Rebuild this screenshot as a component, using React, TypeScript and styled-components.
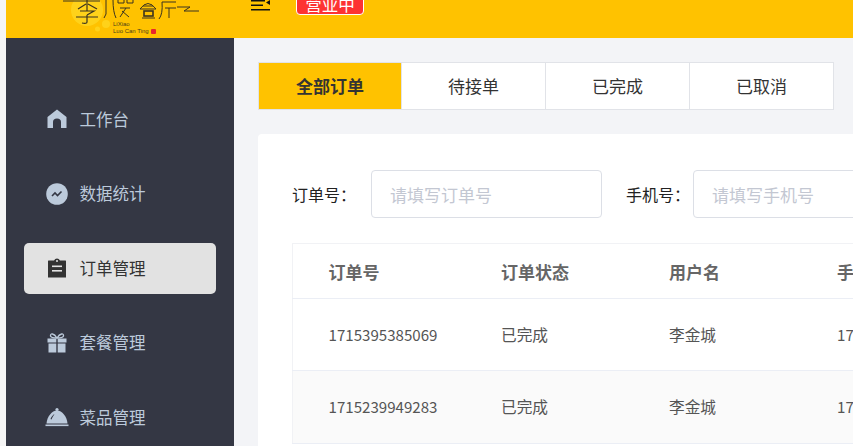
import React from "react";
import styled, { createGlobalStyle } from "styled-components";

const GlobalStyle = createGlobalStyle`
  html, body {
    margin: 0;
    padding: 0;
    height: 100%;
    overflow: hidden;
    background: #f5f5f5;
    font-family: "Noto Sans CJK SC", "Noto Sans", sans-serif;
  }
  * { box-sizing: border-box; }
`;

const tabs = ["全部订单", "待接单", "已完成", "已取消"];
const rows = [
  { id: "1715395385069", status: "已完成", user: "李金城", phone: "17" },
  { id: "1715239949283", status: "已完成", user: "李金城", phone: "17" },
];

function HomeIcon() {
  return (
    <svg width="20" height="20" viewBox="0 0 20 20">
      <path fill="#bccadb" d="M10 0.5 L19.5 8 V19 H14 V13 Q14 9.5 10 9.5 Q6 9.5 6 13 V19 H0.5 V8 Z" />
    </svg>
  );
}

function ChartIcon() {
  return (
    <svg width="22" height="22" viewBox="0 0 22 22">
      <circle cx="11" cy="11" r="10.8" fill="#bccadb" />
      <path d="M6 13 L9 10 L11.5 12.5 L15.5 8.5" fill="none" stroke="#343744" strokeWidth="1.6" />
    </svg>
  );
}

function ClipboardIcon() {
  return (
    <svg width="20" height="20" viewBox="0 0 20 20">
      <path fill="#333" d="M1.5 2.5 H7 Q8 0.5 10 0.5 Q12 0.5 13 2.5 H18.5 Q19 2.5 19 3 V19.5 H1 V3 Q1 2.5 1.5 2.5 Z" />
      <rect x="5" y="7.5" width="10" height="1.6" fill="#e2e2e2" />
      <rect x="5" y="12" width="10" height="1.6" fill="#e2e2e2" />
      <circle cx="10" cy="3" r="1" fill="#e2e2e2" />
    </svg>
  );
}

function GiftIcon() {
  return (
    <svg width="20" height="20" viewBox="0 0 20 20">
      <path d="M10 5 C7 0 3 0 3.5 3 C4 5 7 5 10 5 C13 5 16 5 16.5 3 C17 0 13 0 10 5 Z" fill="none" stroke="#bccadb" strokeWidth="1.3" />
      <rect x="0.5" y="5.5" width="8.8" height="4" fill="#bccadb" />
      <rect x="10.7" y="5.5" width="8.8" height="4" fill="#bccadb" />
      <rect x="1.5" y="10.5" width="7.8" height="9" fill="#bccadb" />
      <rect x="10.7" y="10.5" width="7.8" height="9" fill="#bccadb" />
    </svg>
  );
}

function ClocheIcon() {
  return (
    <svg width="24" height="20" viewBox="0 0 24 20">
      <circle cx="12" cy="2.5" r="1.6" fill="#bccadb" />
      <path fill="#bccadb" d="M1.5 16.5 C2 9.5 7 3.5 12 3.5 C17 3.5 22 9.5 22.5 16.5 Z" />
      <path fill="#343744" d="M5.5 12 C6.5 9.5 8 8 9.5 7 C8.5 8.5 7.5 10 6.5 12.5 Z" />
      <rect x="0.5" y="17.5" width="23" height="1.6" fill="#bccadb" />
    </svg>
  );
}

function MenuToggleIcon() {
  return (
    <svg width="20" height="11" viewBox="0 0 20 11">
      <rect x="0" y="0" width="14" height="1.5" fill="#111" />
      <rect x="0" y="4.5" width="12" height="1.5" fill="#111" />
      <rect x="0" y="9" width="19" height="1.5" fill="#111" />
      <path d="M19 0 V5 L15 2.5 Z" fill="#111" />
    </svg>
  );
}

function LogoArt() {
  return (
    <svg width="140" height="38" viewBox="60 0 140 38">
      <circle cx="87" cy="10" r="16" fill="#ffd21a" />
      <circle cx="106" cy="24" r="4" fill="#ffd21a" />
      <circle cx="97.5" cy="29" r="2.5" fill="#ffd21a" />
      <g fill="none" stroke="#3a3320" strokeWidth="1.2">
        <path d="M63 1 H100 M87 0 V11 M78 9 L86 4 M88 4 L97 9" />
        <path d="M80 11 H94 L87 15 M76 17 H98 M87 15 V22 Q87 24 82 23" />
        <path d="M106 0 V14 L104 18 M113 0 Q113 12 116 18" strokeWidth="1" />
        <path d="M118 0 V3 H124 V0 M127 0 V3 H133 V0 M120 8 H130 M126 8 L120 17 M122 11 L129 17" strokeWidth="1" />
        <path d="M140 9 Q148 -2 156 9 Z M143 6 H153" strokeWidth="1" />
        <rect x="144" y="11" width="9" height="5" strokeWidth="1.6" />
        <path d="M142 18 H155" strokeWidth="1" />
        <path d="M162 2 H176 M162 2 Q163 14 159 19 M165 8 H176 M169 8 V18" strokeWidth="1" />
        <path d="M177 7 H190 L184 11 H199" strokeWidth="1" />
      </g>
    </svg>
  );
}

const Page = styled.div`
  width: 853px;
  height: 446px;
  padding-left: 6px;
  overflow: hidden;
`;

const Header = styled.header`
  position: relative;
  height: 38px;
  background: #ffc200;
  display: flex;
  overflow: hidden;
`;

const LogoBox = styled.div`
  position: relative;
  width: 140px;
  margin-left: 54px;
  flex: none;
`;

const LogoText = styled.div`
  position: absolute;
  left: 53px;
  top: 20.5px;
  font-family: "Liberation Sans", sans-serif;
  font-size: 6px;
  line-height: 7px;
  color: #4a3f1a;
  white-space: nowrap;
`;

const Seal = styled.i`
  display: inline-block;
  width: 5px;
  height: 5px;
  margin-left: 2px;
  background: #e8262d;
  border-radius: 1px;
  vertical-align: -1px;
`;

const Toggle = styled.div`
  flex: none;
  margin-left: 51px;
  height: 11px;
  line-height: 0;
`;

const StatusBadge = styled.div`
  flex: none;
  margin-left: 25px;
  margin-top: -9px;
  width: 68px;
  height: 24px;
  background: #fd3333;
  border: 1px solid #fff;
  border-radius: 4px;
  color: #fff;
  font-size: 16.5px;
  line-height: 24px;
  text-align: center;
`;

const Body = styled.div`
  display: flex;
  height: 408px;
`;

const Sidebar = styled.nav`
  flex: none;
  width: 228px;
  height: 100%;
  background: #343744;
  padding: 55.5px 18px 0;
  display: flex;
  flex-direction: column;
  gap: 23.6px;
`;

const MenuItem = styled.div<{ $active?: boolean }>`
  flex: none;
  height: 51px;
  display: flex;
  align-items: center;
  border-radius: 5px;
  background: ${(p) => (p.$active ? "#e2e2e2" : "transparent")};
  color: ${(p) => (p.$active ? "#333" : "#bccadb")};
  font-size: 16.5px;
  line-height: 49px;
`;

const MenuIcon = styled.span`
  width: 55.5px;
  padding-left: 10px;
  height: 24px;
  display: flex;
  align-items: center;
  justify-content: center;
  flex: none;
`;

const Main = styled.main`
  flex: 1;
  min-width: 0;
  background: #f3f4f7;
  padding: 24px 0 0 24px;
`;

const TabBar = styled.div`
  display: flex;
  width: 576px;
  height: 48px;
  border: 1px solid #e1e3e8;
  border-right: 0;
  background: #fff;
`;

const Tab = styled.div<{ $active?: boolean }>`
  flex: none;
  width: 144px;
  display: flex;
  align-items: center;
  justify-content: center;
  font-size: 17px;
  line-height: 44px;
  color: #333;
  font-weight: ${(p) => (p.$active ? 700 : 400)};
  background: ${(p) => (p.$active ? "#ffc200" : "#fff")};
  border-right: 1px solid #e1e3e8;
  &:first-child {
    width: 143px;
  }
`;

const Card = styled.section`
  width: 800px;
  margin-top: 24px;
  height: 400px;
  background: #fff;
  border-radius: 4px;
  padding: 36px 34px 0;
`;

const FilterRow = styled.div`
  display: flex;
  align-items: center;
`;

const FilterLabel = styled.label<{ $w: number }>`
  font-size: 16px;
  color: #222;
  white-space: nowrap;
  width: ${(p) => p.$w}px;
  flex: none;
`;

const FilterInput = styled.input`
  flex: none;
  width: 231px;
  height: 48px;
  margin-right: 24px;
  padding: 0 18px;
  border: 1px solid #dcdfe6;
  border-radius: 4px;
  background: #fff;
  font: inherit;
  font-size: 17px;
  &::placeholder {
    color: #c3c7d2;
    opacity: 1;
  }
`;

const Table = styled.table`
  margin-top: 25px;
  width: 700px;
  border-collapse: collapse;
  table-layout: fixed;
  border-top: 1px solid #f1f2f5;
  border-left: 1px solid #f1f2f5;
  color: #555;
`;

const HeadCell = styled.th<{ $w: number }>`
  width: ${(p) => p.$w}px;
  height: 55px;
  padding: 0 0 0 35.5px;
  text-align: left;
  font-size: 17px;
  font-weight: 700;
  color: #666;
  white-space: nowrap;
  border-bottom: 1px solid #ebeef5;
`;

const BodyRow = styled.tr<{ $striped?: boolean }>`
  background: ${(p) => (p.$striped ? "#fafafa" : "#fff")};
`;

const Cell = styled.td<{ $cjk?: boolean }>`
  height: 72.3px;
  padding: 0 0 ${(p) => (p.$cjk ? "0" : "2px")} 35.5px;
  font-size: ${(p) => (p.$cjk ? "15.7px" : "15.1px")};
  color: #555;
  white-space: nowrap;
  border-bottom: 1px solid #ebeef5;
`;

const menu = [
  { label: "工作台", icon: <HomeIcon /> },
  { label: "数据统计", icon: <ChartIcon /> },
  { label: "订单管理", icon: <ClipboardIcon />, active: true },
  { label: "套餐管理", icon: <GiftIcon /> },
  { label: "菜品管理", icon: <ClocheIcon /> },
];

export default function App() {
  return (
    <Page>
      <GlobalStyle />
      <Header>
        <LogoBox>
          <LogoArt />
          <LogoText>
            LiXiao
            <br />
            Luo Can Ting
            <Seal />
          </LogoText>
        </LogoBox>
        <Toggle>
          <MenuToggleIcon />
        </Toggle>
        <StatusBadge>营业中</StatusBadge>
      </Header>
      <Body>
        <Sidebar>
          {menu.map((m) => (
            <MenuItem key={m.label} $active={m.active}>
              <MenuIcon>{m.icon}</MenuIcon>
              {m.label}
            </MenuItem>
          ))}
        </Sidebar>
        <Main>
          <TabBar>
            {tabs.map((t, i) => (
              <Tab key={t} $active={i === 0}>
                {t}
              </Tab>
            ))}
          </TabBar>
          <Card>
            <FilterRow>
              <FilterLabel $w={79}>订单号：</FilterLabel>
              <FilterInput placeholder="请填写订单号" />
              <FilterLabel $w={67}>手机号：</FilterLabel>
              <FilterInput placeholder="请填写手机号" />
            </FilterRow>
            <Table>
              <thead>
                <tr>
                  <HeadCell $w={173}>订单号</HeadCell>
                  <HeadCell $w={168}>订单状态</HeadCell>
                  <HeadCell $w={168}>用户名</HeadCell>
                  <HeadCell $w={191}>手机号</HeadCell>
                </tr>
              </thead>
              <tbody>
                {rows.map((r, i) => (
                  <BodyRow key={r.id} $striped={i === 1}>
                    <Cell>{r.id}</Cell>
                    <Cell $cjk>{r.status}</Cell>
                    <Cell $cjk>{r.user}</Cell>
                    <Cell>{r.phone}</Cell>
                  </BodyRow>
                ))}
              </tbody>
            </Table>
          </Card>
        </Main>
      </Body>
    </Page>
  );
}
